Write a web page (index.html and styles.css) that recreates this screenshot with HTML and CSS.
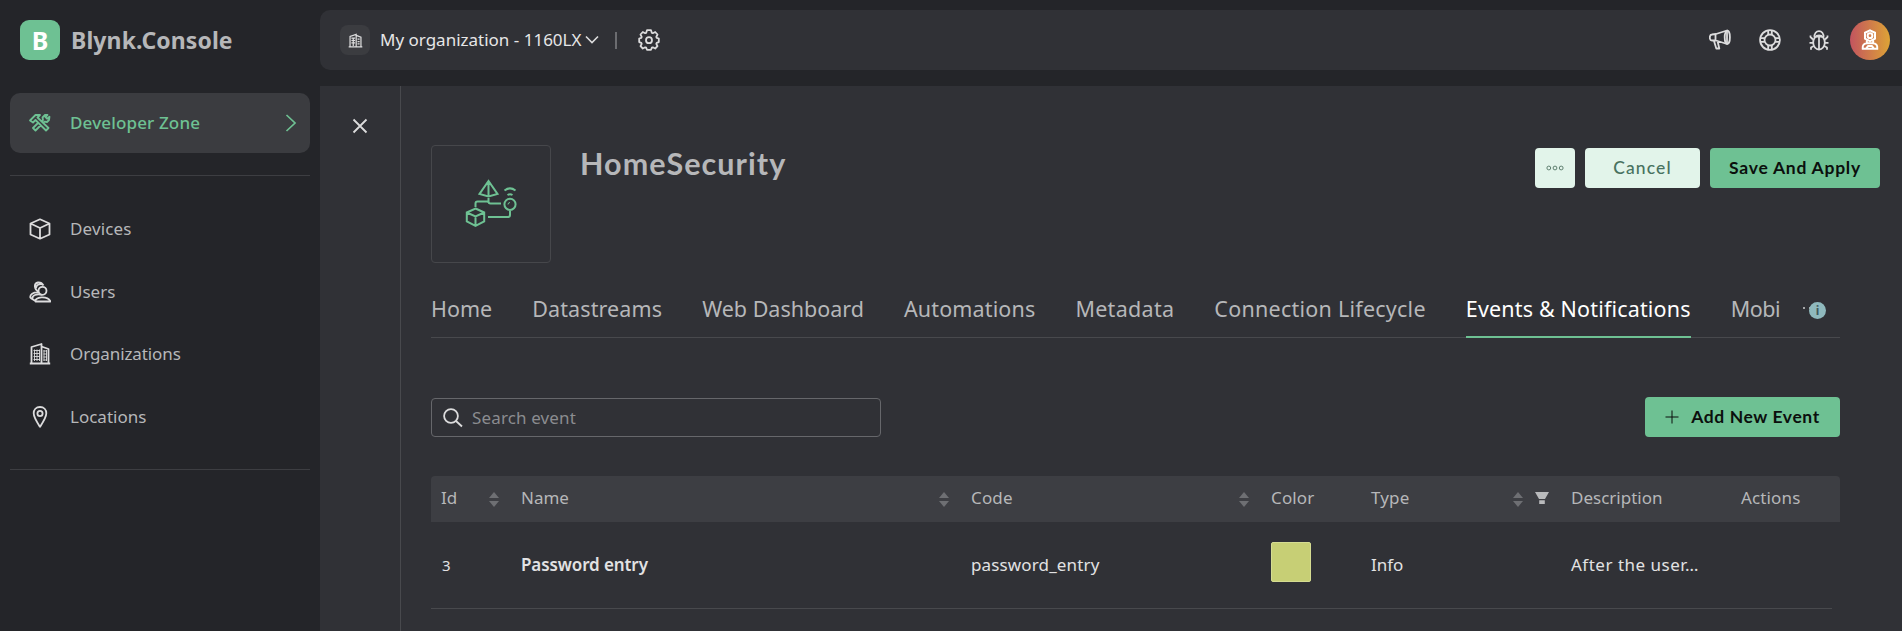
FILE: index.html
```html
<!DOCTYPE html>
<html lang="en">
<head>
<meta charset="utf-8">
<title>Blynk.Console</title>
<link rel="stylesheet" href="styles.css">
</head>
<body>
<div class="app">
  <aside class="sidebar">
    <div class="brand">
      <span class="brand-mark">B</span>
      <span class="brand-name">Blynk.Console</span>
    </div>
    <a class="zone">
      <svg class="icon" viewBox="0 0 22 22" width="22" height="22"><path d="M1 8.500 6.500 3h4.500l-2.500 2.500 11 10.500-2.500 2.500L6.500 8 4 10.500ZM12.500 9.500l1.500-1.500-.5-2.500L16 3l2.500-.2-2 2.400 1.500 1.500 2.500-2-.5 3.300-2 2-2.500-.3-1.300 1.200M9 11l-5 5 2.500 2.500 5-5"/></svg>
      <span class="zone-name">Developer Zone</span>
      <svg class="zone-arrow" viewBox="0 0 12 18" width="12" height="18"><path d="m1.500 1 8.500 8-8.500 8"/></svg>
    </a>
    <nav class="nav">
      <a class="nav-item"><svg class="icon" viewBox="0 0 22 22" width="22" height="22"><path d="M11 1.300 20.500 5.500v11L11 20.700 1.500 16.500v-11ZM1.500 5.500 11 10l9.500-4.500M11 10v10.500"/></svg><span class="loose">Devices</span></a>
      <a class="nav-item"><svg class="icon" viewBox="0 0 22 22" width="22" height="22"><circle cx="13.500" cy="9.800" r="4"/><path d="M9.600 11C5 8 4.500 2.500 9 1.500c2.500-.3 4 .5 5.500 3M7 7c.5-3 3-4.500 6-3.500M6.500 20.500c-1.500-4.500 12-6.500 15 0ZM3.500 18.500C2.500 14 8 12.500 13 13.800M1.500 17c-1.200-3.500 3-6 8-5.500M1.500 17l5 3"/></svg><span>Users</span></a>
      <a class="nav-item"><svg class="icon" viewBox="0 0 22 22" width="22" height="22"><path d="M2.500 20V4L12.500 1v19M12.500 3.500l7 2.500v14M.8 20.500h20.400"/><path class="thin" d="M4.500 7.500h6.500M4.500 10.500h6.500M4.500 13.500h6.500M4.500 16.500h6.500M5.500 6.500V18M8 6.500V18M10.500 6.500V18M14.500 8h3.500M14.500 11h3.500M14.500 14h3.500M14.500 17h3.500M15 7v11M17.500 7v11"/></svg><span class="snug">Organizations</span></a>
      <a class="nav-item"><svg class="icon" viewBox="0 0 22 22" width="22" height="22"><path d="M11 1c-4 0-6.300 2.800-6.300 6.300C4.700 11.500 8.500 17 11 20.800c2.500-3.800 6.300-9.300 6.300-13.500C17.300 3.800 15 1 11 1Z"/><circle cx="11" cy="7.500" r="2.600"/></svg><span>Locations</span></a>
    </nav>
  </aside>

  <div class="stage">
    <header class="topbar">
      <span class="org-badge"><svg viewBox="0 0 22 22" width="15" height="15"><path d="M3 20V5L12 2v18M12 3.500l7 2.500V20M1 20.500h20"/><path d="M5 7.500h5.500M5 11h5.500M5 14.500h5.500M14 9h3M14 12.500h3M14 16h3M7.700 7v12"/></svg></span>
      <span class="org-name">My organization - 1160LX</span>
      <svg class="chev" viewBox="0 0 14 10" width="14" height="10"><path d="M1 1.500 7 7.500l6-6"/></svg>
      <span class="bar"></span>
      <svg class="icon gear" viewBox="0 0 22 22" width="22" height="22"><path d="M9 1.200h4l.8 2.600 1 .4 2.400-1.200 2.300 2.500-1.200 2.400.4 1 2.100.6v3.600l-2.100.7-.4 1 1.200 2.400-2.300 2.300-2.400-1.200-1 .4-.8 2.100H9l-.8-2.100-1-.4-2.400 1.200-2.300-2.300 1.200-2.400-.4-1-2.100-.7V9.500l2.100-.6.4-1-1.200-2.400L4.800 3l2.400 1.200 1-.4Z"/><circle cx="11" cy="11.200" r="3"/></svg>
      <div class="tools">
        <svg class="icon" viewBox="0 0 22 22" width="22" height="22"><path d="M3 5.500 7 5l11-3.500V15L7 11.500H3Q.8 11.500.8 8.500T3 5.500ZM6.500 5.200v6M5 12l2.300 7.500h3L8.500 12"/><ellipse cx="18.300" cy="8.200" rx="2.600" ry="6.600"/></svg>
        <svg class="icon" viewBox="0 0 22 22" width="22" height="22"><circle cx="11" cy="11" r="9.900"/><circle cx="11" cy="11" r="5.500"/><path d="M9.200 1.500v4.300M12.800 1.500v4.300M9.200 16.200v4.300M12.800 16.200v4.300M1.500 9.200h4.300M1.500 12.800h4.300M16.200 9.200h4.300M16.200 12.800h4.300"/></svg>
        <svg class="icon" viewBox="0 0 22 22" width="22" height="22"><ellipse cx="11" cy="13.500" rx="5.800" ry="7"/><path d="M11 7v13M6.500 8.500C5.500 0 16.500 0 15.500 8.500M8 7.500h6M5 10.500 2.500 8V6.500M17 10.500 19.500 8V6.500M5 13.800H1.500M17 13.800h3.500M5.800 17 3 18.500v2.300M16.200 17l2.800 1.500v2.300"/></svg>
        <span class="avatar"><svg viewBox="0 0 22 24" width="20" height="22"><path d="M11 1.500 16.500 4v6.500L11 13.300 5.500 10.500V4ZM7.500 12.500v3M14.500 12.500v3M3 21.500c-.5-4 1.500-6 5-6h6c3.500 0 5.500 2 5 6ZM7 21l2-2.500h4l2 2.500"/><circle cx="11" cy="7.200" r="2.600"/></svg></span>
      </div>
    </header>

    <div class="panel">
      <div class="rail"><svg class="close" viewBox="0 0 16 16" width="16" height="16"><path d="m1.500 1.500 13 13M14.500 1.500l-13 13"/></svg></div>
      <main class="content">
        <section class="head">
          <div class="thumb"><svg viewBox="0 0 52 50" width="52" height="50"><path d="M23.500 2 14.500 15l9 2.500 9-2.500ZM23.500 2v15.500M23.500 19v5M10.500 28v-3.500q0-2 2-2h11M23.500 22.500q0 2 2 2H36M23 38h20q2 0 2-2v-4M10.500 29.500l8.700 4v9l-8.700 4.300-8.700-4.300v-9ZM1.800 33.500l8.700 4 8.700-4M10.500 37.500v9M39.500 11.500q5.500-4.200 11 0M42.500 16q2.500-1.500 5 0"/><circle cx="45" cy="25.300" r="5.600"/><path class="glint" d="M43 25.500q0-2 2-2"/></svg></div>
          <h1 class="title">HomeSecurity</h1>
          <div class="actions">
            <button class="btn light more"><svg viewBox="0 0 18 6" width="18" height="6"><circle cx="2.800" cy="3" r="1.900"/><circle cx="9" cy="3" r="1.900"/><circle cx="15.200" cy="3" r="1.900"/></svg></button>
            <button class="btn light cancel">Cancel</button>
            <button class="btn green save">Save And Apply</button>
          </div>
        </section>

        <div class="tabs">
          <a class="tab t-home">Home</a>
          <a class="tab t-data">Datastreams</a>
          <a class="tab t-web">Web Dashboard</a>
          <a class="tab t-auto">Automations</a>
          <a class="tab t-meta">Metadata</a>
          <a class="tab t-conn">Connection Lifecycle</a>
          <a class="tab t-events active">Events &amp; Notifications</a>
          <a class="tab t-mobile">Mobi</a>
          <span class="overflow-dots"></span>
          <span class="info">i</span>
        </div>

        <section class="filters">
          <label class="search"><svg viewBox="0 0 20 20" width="20" height="20"><circle cx="8" cy="8" r="6.900"/><path d="m13 13 6 5.500"/></svg><span class="loose">Search event</span></label>
          <button class="btn green add"><svg viewBox="0 0 14 14" width="14" height="14"><path d="M7 .5v13M.5 7h13"/></svg><span>Add New Event</span></button>
        </section>

        <section class="table">
          <div class="row thead">
            <div class="cell"><span>Id</span><i class="sort"></i></div>
            <div class="cell"><span>Name</span><i class="sort"></i></div>
            <div class="cell"><span class="loose">Code</span><i class="sort"></i></div>
            <div class="cell"><span class="loose">Color</span></div>
            <div class="cell"><span class="loose">Type</span><i class="sort"></i><svg class="funnel" viewBox="0 0 14 14" width="14" height="14"><path d="M0 1h14L10 8H4ZM4.200 9.200h5.600V13H4.200Z"/></svg></div>
            <div class="cell"><span>Description</span></div>
            <div class="cell"><span class="loose">Actions</span></div>
          </div>
          <div class="row tbody">
            <div class="cell num">3</div>
            <div class="cell strong"><span class="snug">Password entry</span></div>
            <div class="cell"><span class="loose">password_entry</span></div>
            <div class="cell"><span class="swatch"></span></div>
            <div class="cell"><span>Info</span></div>
            <div class="cell"><span class="excerpt">After the user…</span></div>
            <div class="cell"></div>
          </div>
        </section>
      </main>
    </div>
  </div>
</div>
</body>
</html>
```
FILE: styles.css
```css
* { box-sizing: border-box; }
body {
  margin: 0;
  background: #242529;
  color: #b6b7b9;
  font: 17px/24px "Noto Sans", sans-serif;
}
svg { display: block; fill: none; stroke: currentColor; flex: none; }
.icon { stroke-width: 1.8; stroke-linejoin: round; }
.thin { stroke-width: .9; }
.loose { letter-spacing: .14px; }
.snug { letter-spacing: -.1px; }
.app { display: flex; width: 100%; height: 631px; overflow: hidden; }

.sidebar { width: 320px; padding: 20px 10px 0; flex: none; }
.brand { display: flex; align-items: center; gap: 11px; height: 40px; padding-left: 10px; }
.brand-mark {
  width: 40px; height: 40px; border-radius: 9px; background: #6ec193; color: #fff;
  font: 700 25px/40px "Noto Sans", sans-serif; text-align: center;
}
.brand-name { font-size: 23px; font-weight: 700; white-space: nowrap; letter-spacing: .1px; }
.zone {
  display: flex; align-items: center; height: 60px; margin-top: 33px; padding: 0 13px 0 19px;
  border-radius: 10px; background: #3b3c40; color: #6ec193;
}
.zone-name { margin-left: 19px; font-weight: 500; letter-spacing: .15px; }
.zone-arrow { margin-left: auto; stroke-width: 1.7; }
.nav { margin-top: 22px; padding: 22px 0 21px; border: solid #3d3e42; border-width: 1px 0; }
.nav-item { display: flex; align-items: center; gap: 19px; height: 62.500px; padding-left: 19px; }
.nav .icon { color: #dcdcdd; }

.stage { flex: 1; min-width: 0; display: flex; flex-direction: column; }
.topbar {
  display: flex; align-items: center; height: 60px; margin: 10px 0 16px; padding: 0 12px 0 20px;
  border-radius: 10px 0 0 10px; background: #303136; color: #dcdcdd; flex: none;
}
.org-badge { display: grid; place-items: center; width: 30px; height: 30px; border-radius: 8px; background: #3b3c40; }
.org-badge svg { stroke-width: 1.8; }
.org-name { margin-left: 10px; white-space: nowrap; color: #e6e6e7; }
.chev { margin-left: 4px; stroke-width: 1.6; }
.bar { width: 2px; height: 17px; margin-left: 16px; background: #6b6c70; }
.gear { margin-left: 21px; }
.tools { display: flex; align-items: center; gap: 27.500px; margin-left: auto; }
.avatar {
  display: grid; place-items: center; width: 40px; height: 40px; margin-left: -7.500px; border-radius: 50%;
  background: linear-gradient(90deg, #c2545f, #dda336); color: #fff;
}
.avatar svg { stroke-width: 2.200; }

.panel { display: flex; flex: 1; background: #303136; }
.rail { width: 81px; padding: 32px 0 0 32px; border-right: 1px solid #48494d; color: #dcdcdd; }
.close { stroke-width: 1.8; }
.content { flex: 1; min-width: 0; padding: 59px 22px 0 30px; }
.head { display: flex; align-items: flex-start; }
.thumb { display: grid; place-items: center; width: 120px; height: 118px; border: 1px solid #46474b; border-radius: 4px; color: #6ec193; }
.thumb svg { stroke-width: 2; }
.thumb .glint { stroke-width: 1; }
.title { margin: 0 0 0 29px; font: 700 30.500px/36px Lato, sans-serif; letter-spacing: 1.080px; white-space: nowrap; }
.actions { display: flex; gap: 10px; margin: 3px 0 0 auto; }
.btn {
  display: flex; align-items: center; justify-content: center; height: 40px; padding: 0; border: 0; border-radius: 4px;
  font: 700 17.500px/24px Lato, sans-serif; white-space: nowrap;
}
.light { background: #e2f4ea; color: #48725f; }
.green { background: #6ec193; color: #0b0f0d; }
.more { width: 40px; color: #5f8070; }
.cancel { width: 115px; font-weight: 500; letter-spacing: 1.100px; }
.save { width: 170px; letter-spacing: .75px; }
.add { width: 195px; gap: 12px; letter-spacing: .6px; }

.tabs {
  display: flex; position: relative; width: 1409px; height: 75px; padding-top: 29px;
  border-bottom: 1px solid #48494d; font-size: 21.500px; line-height: 34px; white-space: nowrap;
}
.tab { flex: none; height: 46px; margin-right: 40px; }
.t-data { letter-spacing: .12px; }
.t-auto { letter-spacing: .14px; }
.t-meta { letter-spacing: .3px; }
.t-conn { letter-spacing: .25px; }
.t-events { letter-spacing: .17px; }
.t-mobile { width: 49px; margin-right: 0; letter-spacing: -.5px; overflow: hidden; }
.active { color: #fff; border-bottom: 2px solid #6ec193; }
.overflow-dots { position: absolute; left: 1372px; top: 44px; width: 2px; height: 2px; background: #a5a6a8; box-shadow: 6px 0 #a5a6a8; }
.info {
  position: absolute; left: 1378px; top: 39px; width: 17px; height: 17px; border-radius: 50%;
  background: #8fb9bd; color: #40585c; font: 700 12px/17px "Noto Sans", sans-serif; text-align: center;
}

.filters { display: flex; justify-content: space-between; width: 1409px; margin-top: 59px; }
.search {
  display: flex; align-items: center; gap: 9px; width: 450px; height: 39px; margin-top: 1px; padding-left: 11px;
  border: 1px solid #66676b; border-radius: 4px; color: #8b8c90;
}
.search svg { color: #dcdcdd; stroke-width: 1.8; }

.table { width: 1409px; margin-top: 39px; }
.row { display: grid; grid-template-columns: 80px 450px 300px 100px 200px 170px 1fr; padding-right: 8px; }
.cell { display: flex; align-items: center; padding: 0 12px 0 10px; white-space: nowrap; }
.thead { height: 46px; border-radius: 4px 4px 0 0; background: #3d3e43; }
.thead .cell { padding-bottom: 2px; }
.tbody { width: 1401px; height: 87px; padding: 0; border-bottom: 1px solid #48494d; color: #e2e2e3; }
.strong { font-weight: 600; }
.num { padding-left: 11px; font-size: 15px; }
.excerpt { letter-spacing: .5px; }
.sort { display: flex; flex-direction: column; gap: 3px; margin-left: auto; position: relative; top: 1px; }
.sort::before, .sort::after { content: ""; border: solid transparent; border-width: 0 5px 6px; border-bottom-color: #6e6f73; }
.sort::after { border-width: 6px 5px 0; border-top-color: #6e6f73; }
.funnel { margin-left: 12px; fill: #b9babc; stroke: none; }
.swatch { width: 40px; height: 40px; margin-bottom: 6px; border: 1px solid #d5dc92; border-radius: 2px; background: #c7cf75; }
```
